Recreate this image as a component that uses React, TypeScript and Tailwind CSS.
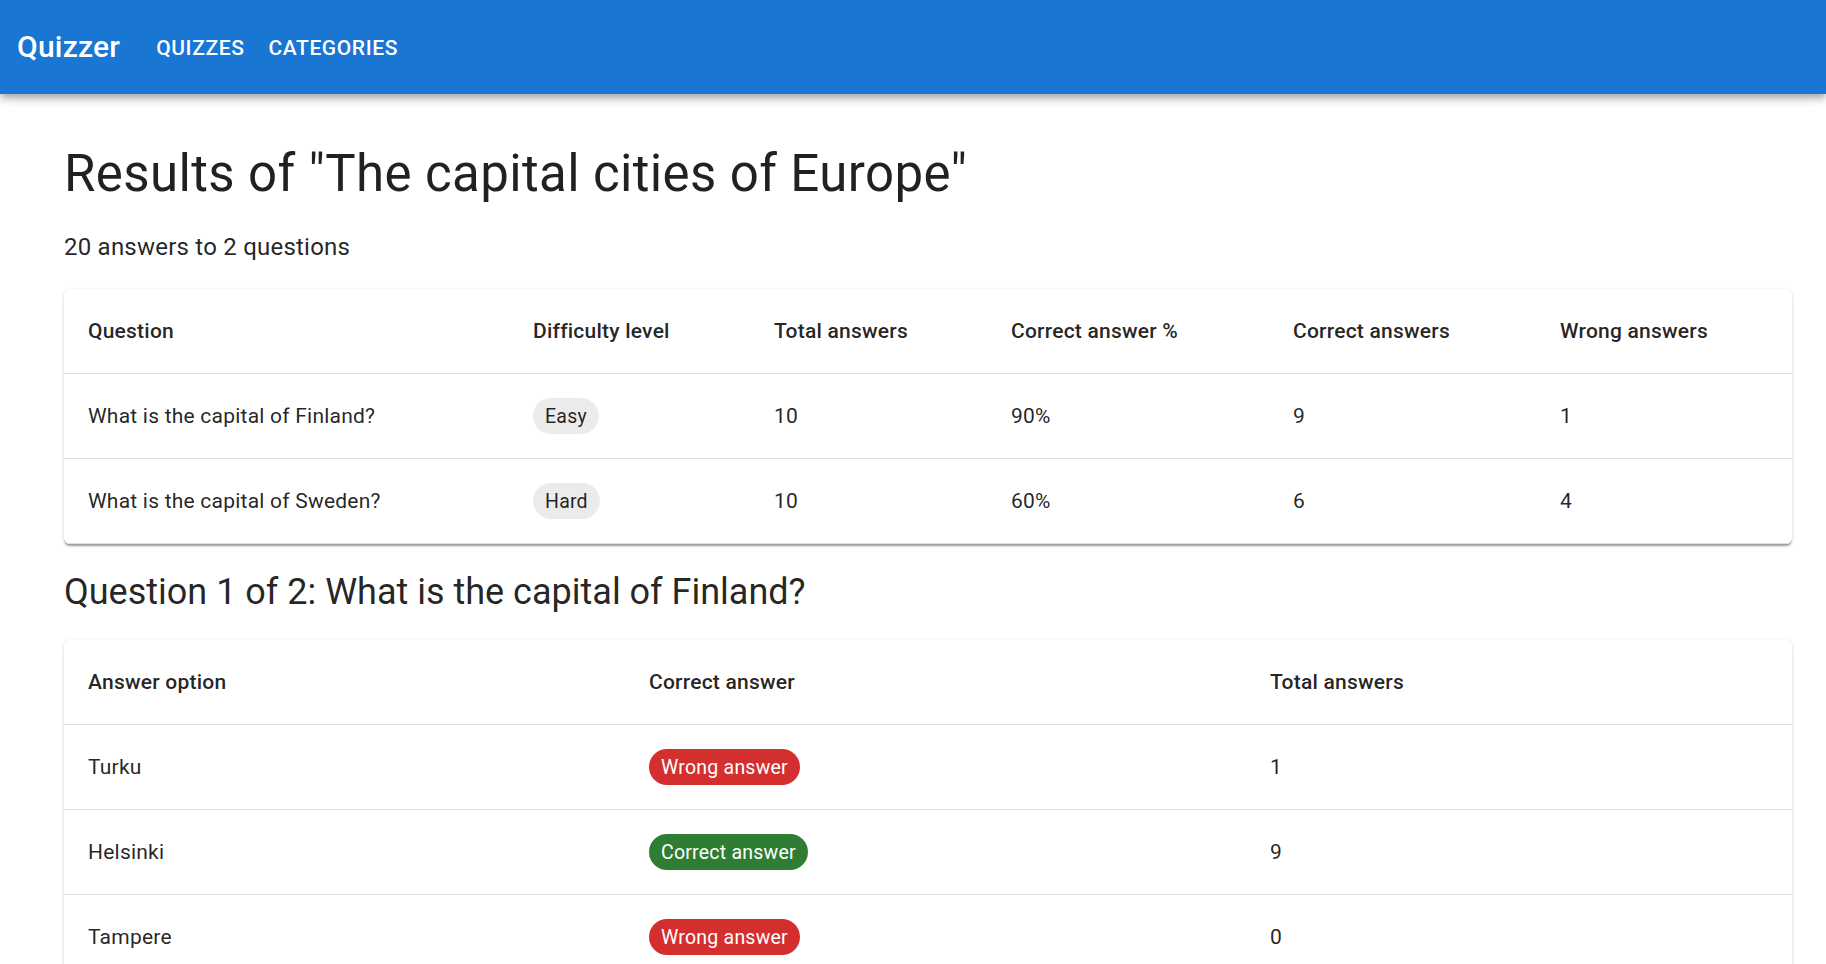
const questions = [
  { text: "What is the capital of Finland?", level: "Easy", total: 10, pct: "90%", correct: 9, wrong: 1 },
  { text: "What is the capital of Sweden?", level: "Hard", total: 10, pct: "60%", correct: 6, wrong: 4 },
]

const options = [
  { text: "Turku", correct: false, total: 1 },
  { text: "Helsinki", correct: true, total: 9 },
  { text: "Tampere", correct: false, total: 0 },
]

const paper =
  "rounded-[6px] bg-white shadow-[0px_3px_1.5px_-1.5px_rgba(0,0,0,0.2),0px_1.5px_1.5px_0px_rgba(0,0,0,0.14),0px_1.5px_4.5px_0px_rgba(0,0,0,0.12)] overflow-hidden"
const th =
  "text-left align-middle px-[24px] py-[24px] text-[21px] leading-[36px] font-medium tracking-[0.01071em] text-[rgba(0,0,0,0.87)] border-b border-[#e0e0e0]"
const td =
  "text-left align-middle px-[24px] py-[24px] text-[21px] leading-[30px] tracking-[0.01071em] text-[rgba(0,0,0,0.87)] border-b border-[#e0e0e0]"

function Chip({ label, tone }: { label: string; tone: "default" | "red" | "green" }) {
  const colors =
    tone === "red"
      ? "bg-[#d32f2f] text-white"
      : tone === "green"
        ? "bg-[#2e7d32] text-white"
        : "bg-[rgba(0,0,0,0.08)] text-[rgba(0,0,0,0.87)]"
  return (
    <span className={`inline-flex items-center h-[36px] rounded-[18px] px-[12px] pt-[2px] text-[19.5px] leading-none align-middle ${colors}`}>
      {label}
    </span>
  )
}

export default function App() {
  return (
    <div className="min-h-screen bg-white font-['Roboto',sans-serif] text-[rgba(0,0,0,0.87)]">
      <header className="h-[94px] bg-[#1976d2] text-white flex items-center px-[17px] shadow-[0px_3px_6px_-1.5px_rgba(0,0,0,0.2),0px_6px_7.5px_0px_rgba(0,0,0,0.14),0px_1.5px_15px_0px_rgba(0,0,0,0.12)] relative z-10">
        <div className="text-[30px] font-medium tracking-[0.0075em] leading-[1.6] mr-[24px]">Quizzer</div>
        <nav className="flex pt-[2px]">
          <button className="px-[12px] py-[9px] text-[21px] font-medium uppercase tracking-[0.02857em] leading-[1.75]">
            Quizzes
          </button>
          <button className="px-[12px] py-[9px] text-[21px] font-medium uppercase tracking-[0.02857em] leading-[1.75]">
            Categories
          </button>
        </nav>
      </header>

      <main className="ml-[64px] w-[1728px] pt-[48px]">
        <h1 className="text-[51px] leading-[63px] tracking-[0.00735em] font-normal">
          Results of "The capital cities of Europe"
        </h1>
        <p className="mt-[24px] text-[24px] leading-[36px] tracking-[0.00938em]">20 answers to 2 questions</p>

        <div className={`mt-[24px] ${paper}`}>
          <table className="w-full table-fixed border-collapse">
            <colgroup>
              <col className="w-[445px]" />
              <col className="w-[241px]" />
              <col className="w-[237px]" />
              <col className="w-[282px]" />
              <col className="w-[267px]" />
              <col className="w-[256px]" />
            </colgroup>
            <thead>
              <tr>
                <th className={th}>Question</th>
                <th className={th}>Difficulty level</th>
                <th className={th}>Total answers</th>
                <th className={th}>Correct answer %</th>
                <th className={th}>Correct answers</th>
                <th className={th}>Wrong answers</th>
              </tr>
            </thead>
            <tbody>
              {questions.map((q) => (
                <tr key={q.text}>
                  <td className={td}>{q.text}</td>
                  <td className={td}>
                    <Chip label={q.level} tone="default" />
                  </td>
                  <td className={td}>{q.total}</td>
                  <td className={td}>{q.pct}</td>
                  <td className={td}>{q.correct}</td>
                  <td className={td}>{q.wrong}</td>
                </tr>
              ))}
            </tbody>
          </table>
        </div>

        <h2 className="mt-[24px] text-[36px] leading-[48px] font-normal">
          Question 1 of 2: What is the capital of Finland?
        </h2>

        <div className={`mt-[24px] ${paper}`}>
          <table className="w-full table-fixed border-collapse">
            <colgroup>
              <col className="w-[561px]" />
              <col className="w-[621px]" />
              <col className="w-[546px]" />
            </colgroup>
            <thead>
              <tr>
                <th className={th}>Answer option</th>
                <th className={th}>Correct answer</th>
                <th className={th}>Total answers</th>
              </tr>
            </thead>
            <tbody>
              {options.map((o) => (
                <tr key={o.text}>
                  <td className={td}>{o.text}</td>
                  <td className={td}>
                    {o.correct ? (
                      <Chip label="Correct answer" tone="green" />
                    ) : (
                      <Chip label="Wrong answer" tone="red" />
                    )}
                  </td>
                  <td className={td}>{o.total}</td>
                </tr>
              ))}
            </tbody>
          </table>
        </div>
      </main>
    </div>
  )
}
